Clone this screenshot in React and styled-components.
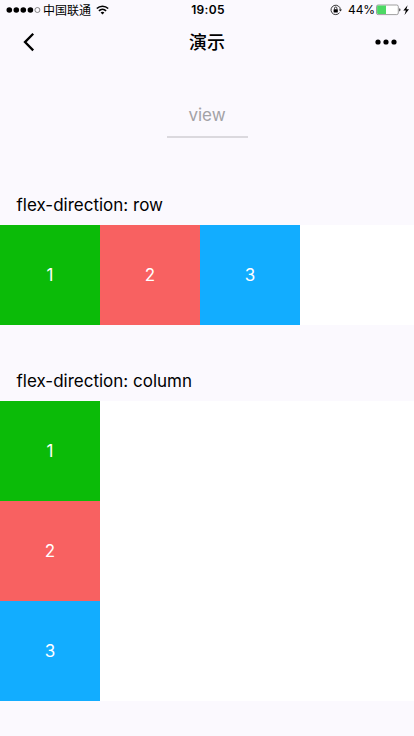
import React from "react";
import styled, { createGlobalStyle } from "styled-components";

const GlobalStyle = createGlobalStyle`
  * { box-sizing: border-box; }
  body { margin: 0; background: #fbf9fe; }
`;

const Screen = styled.div`
  width: 414px;
  height: 736px;
  display: flex;
  flex-direction: column;
  overflow: hidden;
  background: #fbf9fe;
  color: #000;
  font-family: Inter, "Noto Sans CJK SC", sans-serif;
`;

const StatusBar = styled.header`
  display: grid;
  grid-template-columns: 1fr auto 1fr;
  align-items: center;
  height: 20px;
  padding: 0 4px 0 6px;
`;

const StatusGroup = styled.div`
  display: flex;
  align-items: center;
  height: 20px;
  justify-content: ${(p) => (p.$end ? "flex-end" : "flex-start")};
  svg { display: block; flex: none; }
`;

const Carrier = styled.span`
  margin: 0 5px 0 2px;
  padding-top: 2px;
  font-size: 12px;
  line-height: 18px;
`;

const Clock = styled.time`
  font-size: 12px;
  font-weight: 600;
  letter-spacing: 0.3px;
  line-height: 20px;
`;

const Percent = styled.span`
  margin: 0 1px 0 6px;
  font-size: 12px;
  letter-spacing: -0.1px;
  line-height: 20px;
`;

const NavBar = styled.nav`
  display: grid;
  grid-template-columns: 1fr auto 1fr;
  align-items: center;
  height: 44px;
  padding: 0 17px;
`;

const NavTitle = styled.h1`
  margin: 0;
  padding-top: 2px;
  font-size: 18px;
  font-weight: 500;
  line-height: 42px;
`;

const NavButton = styled.button`
  display: flex;
  margin-left: ${(p) => (p.$end ? 0 : 5)}px;
  padding: 0;
  border: 0;
  background: none;
  color: #000;
  justify-self: ${(p) => (p.$end ? "end" : "start")};
`;

const PageHead = styled.div`
  align-self: center;
  width: 81px;
  height: 48px;
  margin-top: 26px;
  border-bottom: 2px solid #dbd9de;
  color: #a3a2a6;
  font-size: 17px;
  line-height: 50px;
  text-align: center;
`;

const Section = styled.section`
  margin-top: ${(p) => p.$gap}px;
`;

const SectionTitle = styled.h2`
  margin: 0;
  padding-left: 16.5px;
  height: 33px;
  font-size: 17px;
  font-weight: 400;
  line-height: 26px;
`;

const FlexDemo = styled.div`
  display: flex;
  flex-direction: ${(p) => p.$direction};
  background: #fff;
`;

const Block = styled.div`
  display: flex;
  align-items: center;
  justify-content: center;
  width: 100px;
  height: 100px;
  background: ${(p) => p.$color};
  color: #fff;
  font-size: 17px;
`;

const BLOCKS = [
  ["1", "#0bbb08"],
  ["2", "#f86161"],
  ["3", "#12adff"],
];

const SECTIONS = [
  { direction: "row", gap: 54 },
  { direction: "column", gap: 43 },
];

function Signal() {
  return (
    <svg width="35" height="8" viewBox="0 0 35 8">
      {[3.3, 10.3, 17.3, 24.4].map((x) => (
        <circle key={x} cx={x} cy="4" r="2.8" />
      ))}
      <circle cx="31.4" cy="4" r="2.5" fill="none" stroke="#555" strokeWidth="0.7" />
    </svg>
  );
}

function Wifi() {
  return (
    <svg width="13" height="10" viewBox="0 0 13 10" fill="none" stroke="#000" strokeWidth="1.5">
      <path d="M0.8 3.6C4 .3 9 .3 12.2 3.6M2.9 5.9C5 3.8 8 3.8 10.1 5.9" />
      <path d="M4.6 7.6Q6.5 6.1 8.4 7.6L6.5 9.5Z" fill="#000" stroke="none" />
    </svg>
  );
}

function RotationLock() {
  return (
    <svg width="12" height="12" viewBox="0 0 12 12" fill="none" stroke="#222" strokeWidth="0.9">
      <path d="M9.5 8.7A4.7 4.7 0 1 1 10.4 5.6" />
      <path d="M8.8 5.4H12L10.4 7.5Z" fill="#222" stroke="none" />
      <rect x="3.6" y="5.2" width="4.2" height="3.2" rx=".4" fill="#000" stroke="none" />
      <path d="M4.5 5.4V4.2a1.2 1.2 0 0 1 2.4 0v1.2" />
    </svg>
  );
}

function Battery() {
  return (
    <svg width="34" height="12" viewBox="0 0 34 12">
      <rect x=".5" y="1" width="21.8" height="9.6" rx="1.6" fill="#fff" stroke="#777" strokeWidth=".7" />
      <path d="M2.1 1.6H10V10H2.1Q1.1 10 1.1 9V2.6Q1.1 1.6 2.1 1.6Z" fill="#4cd964" />
      <path d="M23.2 4.2Q24.5 4.5 24.5 5.8T23.2 7.4Z" fill="#444" />
      <path d="M31.6 1.2L27.3 6.6H29.9L28.5 11L33 5.2H30.4Z" />
    </svg>
  );
}

export default function App() {
  return (
    <Screen>
      <GlobalStyle />
      <StatusBar>
        <StatusGroup>
          <Signal />
          <Carrier>中国联通</Carrier>
          <Wifi />
        </StatusGroup>
        <Clock>19:05</Clock>
        <StatusGroup $end>
          <RotationLock />
          <Percent>44%</Percent>
          <Battery />
        </StatusGroup>
      </StatusBar>
      <NavBar>
        <NavButton aria-label="Back">
          <svg width="14" height="20" viewBox="0 0 14 20" fill="none" stroke="#000" strokeWidth="2.3">
            <path d="M11.2 1.8L3 10.1L11.2 18.4" />
          </svg>
        </NavButton>
        <NavTitle>演示</NavTitle>
        <NavButton $end aria-label="More">
          <svg width="22" height="6" viewBox="0 0 22 6">
            <circle cx="3" cy="3" r="2.6" />
            <circle cx="11" cy="3" r="2.6" />
            <circle cx="19" cy="3" r="2.6" />
          </svg>
        </NavButton>
      </NavBar>
      <PageHead>view</PageHead>
      {SECTIONS.map(({ direction, gap }) => (
        <Section key={direction} $gap={gap}>
          <SectionTitle>flex-direction: {direction}</SectionTitle>
          <FlexDemo $direction={direction}>
            {BLOCKS.map(([label, color]) => (
              <Block key={label} $color={color}>{label}</Block>
            ))}
          </FlexDemo>
        </Section>
      ))}
    </Screen>
  );
}
